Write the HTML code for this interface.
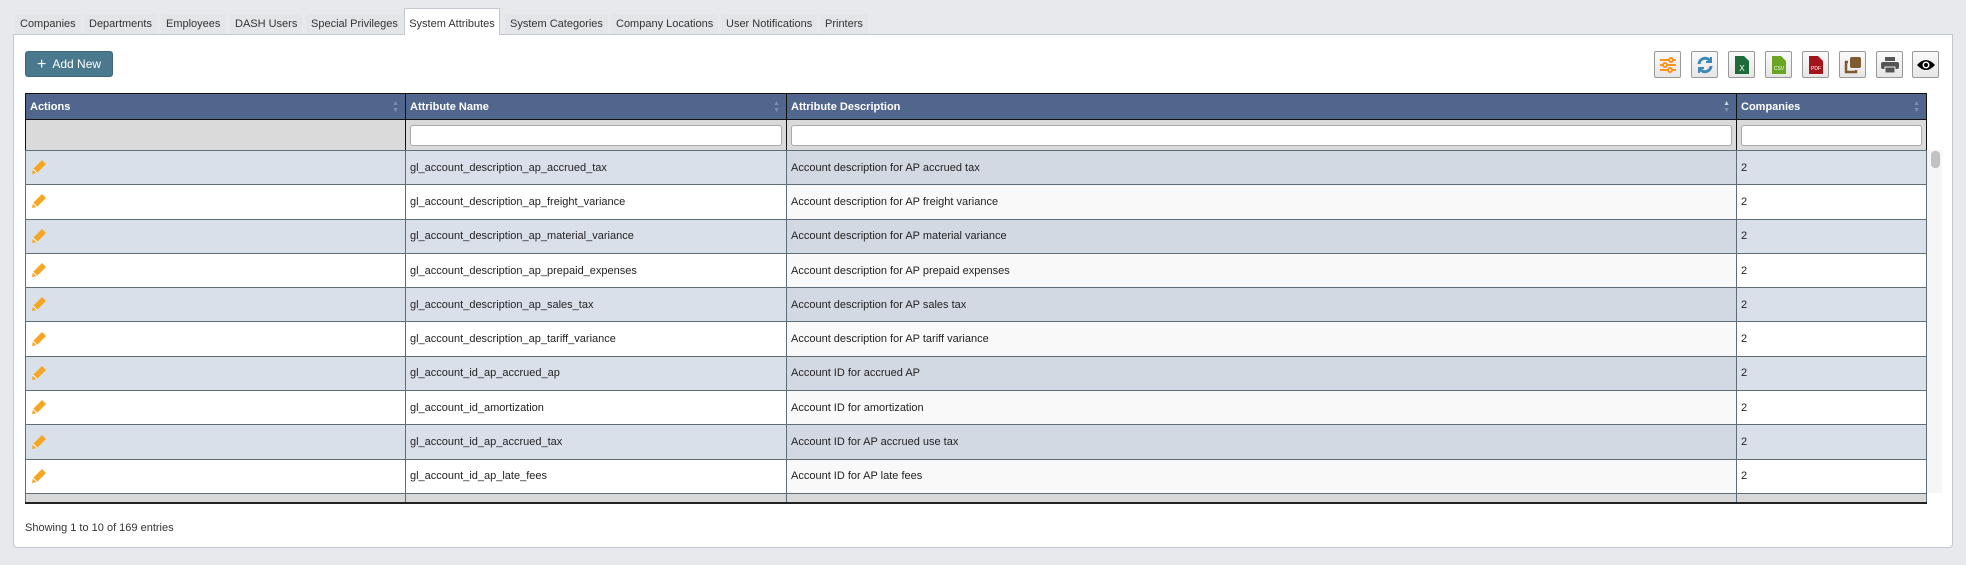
<!DOCTYPE html>
<html><head><meta charset="utf-8"><style>
*{box-sizing:border-box;margin:0;padding:0}
body{width:1966px;height:565px;background:#e8e9ec;font-family:"Liberation Sans",Arial,sans-serif;position:relative;overflow:hidden;color:#222}
.tab{position:absolute;top:14px;height:20px;font-size:11px;line-height:20px;color:#333;background:#e4e5e8;padding:0 5px;white-space:nowrap}
.tab.act{top:8px;height:27px;line-height:30px;background:#fff;border:1px solid #c3c8d0;border-bottom:none;z-index:2;padding:0 0;width:96px;text-align:center}
.panel{position:absolute;left:13px;top:34px;width:1940px;height:514px;background:#fff;border:1px solid #c3c8d0;border-radius:0 0 4px 4px}
.btn{position:absolute;left:25px;top:51px;width:88px;height:26px;background:#4a788c;border:1px solid #3d6677;border-radius:3px;color:#fff;font-size:12px;line-height:24px;padding-left:11px}
.ib{position:absolute;top:51px;width:27px;height:27px;border:1px solid #999;border-radius:2px;background:linear-gradient(#fafafa,#e6e6e6);display:flex;align-items:center;justify-content:center}
table{position:absolute;left:25px;top:93px;border-collapse:collapse;table-layout:fixed;font-size:11px}
th{background:#51668c;color:#fff;text-align:left;height:26px;padding:0 4px;border:1px solid #111;font-weight:bold;position:relative}
th .s{position:absolute;right:6px;top:6px;color:#7d8fae;font-size:7px;line-height:7px}
.f td{background:#dadada;height:31px;border-left:1px solid #111;border-right:1px solid #111;border-bottom:1px solid #5e6d78;padding:0 4px}
.f input{width:100%;height:21px;border:1px solid #aaa;border-radius:3px;display:block}
td{height:34.3px;padding:0 4px;border:1px solid #5e6d78;vertical-align:middle}
tr.o td{background:#dae0ea}
tr.o td.d{background:#d3d9e2}
tr.e td{background:#fff}
tr.e td.d{background:#f9f9f9}
tr.g td{background:#d8d8d8;height:10px;border-bottom:2px solid #222}
.p{display:block}
</style></head><body>
<div class="tab" style="left:15px">Companies</div>
<div class="tab" style="left:84px">Departments</div>
<div class="tab" style="left:161px">Employees</div>
<div class="tab" style="left:230px">DASH Users</div>
<div class="tab" style="left:306px">Special Privileges</div>
<div class="tab act" style="left:404px">System Attributes</div>
<div class="tab" style="left:505px">System Categories</div>
<div class="tab" style="left:611px">Company Locations</div>
<div class="tab" style="left:721px">User Notifications</div>
<div class="tab" style="left:820px">Printers</div>
<div class="panel"></div>
<div class="btn"><span style="font-size:16px;vertical-align:-1px">+</span>&nbsp; Add New</div>
<div class="ib" style="left:1654px"><svg width="18" height="16" stroke="#f7931e" stroke-width="2" fill="#fff"><path d="M1 3h16M1 8h16M1 13h16"/><circle cx="12" cy="3" r="2"/><circle cx="6" cy="8" r="2"/><circle cx="11" cy="13" r="2"/></svg></div>
<div class="ib" style="left:1691px"><svg width="18" height="18" fill="none" stroke="#3d8ab5" stroke-width="3"><path d="M3 8a6 6 0 0 1 11-3M15 10a6 6 0 0 1-11 3"/><path d="M15 1v5h-5M3 17v-5h5" stroke-width="2"/></svg></div>
<div class="ib" style="left:1728px"><svg width="14" height="18"><path d="M0 0h9l5 5v13H0z" fill="#1e6b3a"/><text x="7" y="15" font-size="8" fill="#fff" text-anchor="middle" font-family="Liberation Sans">X</text></svg></div>
<div class="ib" style="left:1765px"><svg width="14" height="18"><path d="M0 0h9l5 5v13H0z" fill="#6aa524"/><text x="7" y="14" font-size="5" fill="#fff" text-anchor="middle" font-family="Liberation Sans">CSV</text></svg></div>
<div class="ib" style="left:1802px"><svg width="14" height="18"><path d="M0 0h9l5 5v13H0z" fill="#a3141b"/><text x="7" y="14" font-size="5" fill="#fff" text-anchor="middle" font-family="Liberation Sans">PDF</text></svg></div>
<div class="ib" style="left:1839px"><svg width="18" height="18"><rect x="6" y="1" width="11" height="11" rx="2" fill="#7d5a2f"/><path d="M4 6H2v10h10v-2" fill="none" stroke="#7d5a2f" stroke-width="2.5"/></svg></div>
<div class="ib" style="left:1876px"><svg width="18" height="16" fill="#555"><rect x="4" y="0" width="10" height="4"/><rect x="0" y="5" width="18" height="7" rx="2"/><rect x="4" y="10" width="10" height="6" fill="#555" stroke="#eee"/></svg></div>
<div class="ib" style="left:1912px"><svg width="20" height="14"><path d="M1 7Q10-3 19 7Q10 17 1 7z" fill="#000"/><circle cx="10" cy="7" r="3.5" fill="#fff"/><circle cx="10" cy="7" r="2" fill="#000"/></svg></div>
<table>
<colgroup><col style="width:380px"><col style="width:381px"><col style="width:950px"><col style="width:190px"></colgroup>
<tr><th>Actions<span class="s">▲<br>▼</span></th><th>Attribute Name<span class="s">▲<br>▼</span></th><th>Attribute Description<span class="s" style="color:#c8d0e0">▲<br><span style="color:#7d8fae">▼</span></span></th><th>Companies<span class="s">▲<br>▼</span></th></tr>
<tr class="f"><td></td><td><input></td><td><input></td><td><input></td></tr>
<tr class="o"><td><svg class="p" width="17" height="17"><path d="M2 15l1-5 9-9 4 4-9 9z" fill="#f5a623"/><path d="M3 10l4 4" stroke="#fff" stroke-width="1"/></svg></td><td>gl_account_description_ap_accrued_tax</td><td class="d">Account description for AP accrued tax</td><td>2</td></tr>
<tr class="e"><td><svg class="p" width="17" height="17"><path d="M2 15l1-5 9-9 4 4-9 9z" fill="#f5a623"/><path d="M3 10l4 4" stroke="#fff" stroke-width="1"/></svg></td><td>gl_account_description_ap_freight_variance</td><td class="d">Account description for AP freight variance</td><td>2</td></tr>
<tr class="o"><td><svg class="p" width="17" height="17"><path d="M2 15l1-5 9-9 4 4-9 9z" fill="#f5a623"/><path d="M3 10l4 4" stroke="#fff" stroke-width="1"/></svg></td><td>gl_account_description_ap_material_variance</td><td class="d">Account description for AP material variance</td><td>2</td></tr>
<tr class="e"><td><svg class="p" width="17" height="17"><path d="M2 15l1-5 9-9 4 4-9 9z" fill="#f5a623"/><path d="M3 10l4 4" stroke="#fff" stroke-width="1"/></svg></td><td>gl_account_description_ap_prepaid_expenses</td><td class="d">Account description for AP prepaid expenses</td><td>2</td></tr>
<tr class="o"><td><svg class="p" width="17" height="17"><path d="M2 15l1-5 9-9 4 4-9 9z" fill="#f5a623"/><path d="M3 10l4 4" stroke="#fff" stroke-width="1"/></svg></td><td>gl_account_description_ap_sales_tax</td><td class="d">Account description for AP sales tax</td><td>2</td></tr>
<tr class="e"><td><svg class="p" width="17" height="17"><path d="M2 15l1-5 9-9 4 4-9 9z" fill="#f5a623"/><path d="M3 10l4 4" stroke="#fff" stroke-width="1"/></svg></td><td>gl_account_description_ap_tariff_variance</td><td class="d">Account description for AP tariff variance</td><td>2</td></tr>
<tr class="o"><td><svg class="p" width="17" height="17"><path d="M2 15l1-5 9-9 4 4-9 9z" fill="#f5a623"/><path d="M3 10l4 4" stroke="#fff" stroke-width="1"/></svg></td><td>gl_account_id_ap_accrued_ap</td><td class="d">Account ID for accrued AP</td><td>2</td></tr>
<tr class="e"><td><svg class="p" width="17" height="17"><path d="M2 15l1-5 9-9 4 4-9 9z" fill="#f5a623"/><path d="M3 10l4 4" stroke="#fff" stroke-width="1"/></svg></td><td>gl_account_id_amortization</td><td class="d">Account ID for amortization</td><td>2</td></tr>
<tr class="o"><td><svg class="p" width="17" height="17"><path d="M2 15l1-5 9-9 4 4-9 9z" fill="#f5a623"/><path d="M3 10l4 4" stroke="#fff" stroke-width="1"/></svg></td><td>gl_account_id_ap_accrued_tax</td><td class="d">Account ID for AP accrued use tax</td><td>2</td></tr>
<tr class="e"><td><svg class="p" width="17" height="17"><path d="M2 15l1-5 9-9 4 4-9 9z" fill="#f5a623"/><path d="M3 10l4 4" stroke="#fff" stroke-width="1"/></svg></td><td>gl_account_id_ap_late_fees</td><td class="d">Account ID for AP late fees</td><td>2</td></tr>
<tr class="g"><td></td><td></td><td></td><td></td></tr>
</table>
<div style="position:absolute;left:1927px;top:150px;width:15px;height:343px;background:#f6f6f6"></div>
<div style="position:absolute;left:1931px;top:151px;width:9px;height:17px;background:#c1c1c1;border-radius:4px"></div>
<div style="position:absolute;left:25px;top:522px;font-size:11px;color:#333">Showing 1 to 10 of 169 entries</div>
</body></html>
